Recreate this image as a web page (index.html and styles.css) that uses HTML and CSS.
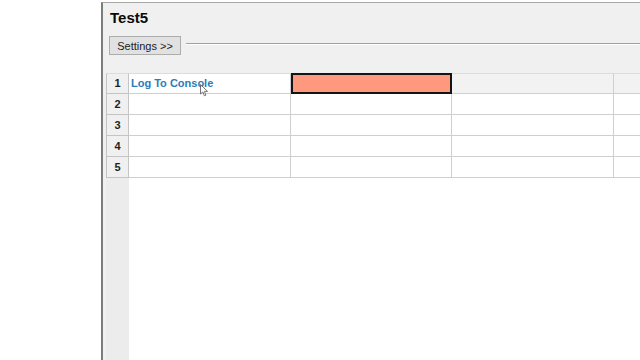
FILE: index.html
```html
<!DOCTYPE html>
<html lang="en">
<head>
  <meta charset="UTF-8" />
  <title>Test5</title>
  <meta name="viewport" content="width=device-width, initial-scale=1" />
  <link rel="stylesheet" href="styles.css">
</head>
<body>
  <div class="window">
    <h1 class="title">Test5</h1>
    <div class="toolbar">
      <button type="button" class="settings-btn">Settings &gt;&gt;</button>
      <span class="rule"></span>
    </div>
    <div class="sheet">
      <div class="row first">
        <div class="rowhead">1</div>
        <div class="cell action">Log To Console</div>
        <div class="cell selected"></div>
        <div class="cell dim"></div>
        <div class="cell dim"></div>
      </div>
      <div class="row">
        <div class="rowhead">2</div>
        <div class="cell"></div>
        <div class="cell"></div>
        <div class="cell"></div>
        <div class="cell"></div>
      </div>
      <div class="row">
        <div class="rowhead">3</div>
        <div class="cell"></div>
        <div class="cell"></div>
        <div class="cell"></div>
        <div class="cell"></div>
      </div>
      <div class="row">
        <div class="rowhead">4</div>
        <div class="cell"></div>
        <div class="cell"></div>
        <div class="cell"></div>
        <div class="cell"></div>
      </div>
      <div class="row">
        <div class="rowhead">5</div>
        <div class="cell"></div>
        <div class="cell"></div>
        <div class="cell"></div>
        <div class="cell"></div>
      </div>
      <div class="filler"></div>
    </div>
    <svg class="cursor" width="9" height="13" viewBox="0 0 9 13">
      <path d="M0.5 0.5 L0.5 10 L2.8 7.9 L4.4 11.8 L5.9 11.2 L4.4 7.4 L7.6 7.4 Z" fill="#fff" stroke="#555" stroke-width="1"/>
    </svg>
  </div>
</body>
</html>
```

FILE: styles.css
```css
*, *::before, *::after {
  box-sizing: border-box;
}

html, body {
  height: 100%;
}

body {
  margin: 0;
  background-color: #ffffff;
  font-family: 'Liberation Sans', Arial, sans-serif;
  color: #222;
  overflow: hidden;
}

.window {
  position: relative;
  margin: 2px 0 0 101px;
  height: calc(100% - 2px);
  background-color: #f0f0f0;
  border-left: 2px solid #7c7c7c;
  border-top: 1px solid #a8a8a8;
  display: flex;
  flex-direction: column;
  overflow: hidden;
}

.title {
  margin: 0;
  padding: 6px 0 0 7px;
  font-size: 15px;
  line-height: 18px;
  font-weight: 700;
  color: #0a0a0a;
}

/* Toolbar */
.toolbar {
  display: flex;
  align-items: center;
  gap: 5px;
  margin-top: 9px;
  padding-left: 6px;
}

.settings-btn {
  height: 19px;
  width: 72px;
  padding: 0;
  font-family: inherit;
  font-size: 11px;
  color: #222;
  background-color: #e1e1e1;
  border: 1px solid #adadad;
  border-radius: 0;
}

.rule {
  flex-grow: 1;
  height: 2px;
  margin-top: -3px;
  border-top: 1px solid #a0a0a0;
  border-bottom: 1px solid #ffffff;
}

/* Sheet grid */
.sheet {
  flex-grow: 1;
  margin: 18px 0 0 3px;
  display: flex;
  flex-direction: column;
}

.row {
  display: grid;
  grid-template-columns: 23px 162px 161px 162px 1fr;
  height: 21px;
}

.rowhead,
.cell {
  border-right: 1px solid #cfcfcf;
  border-bottom: 1px solid #cfcfcf;
}

.row .cell:last-child {
  border-right: none;
}

.row.first .rowhead,
.row.first .cell {
  border-top: 1px solid #dcdcdc;
}

.rowhead {
  background-color: #f0f0f0;
  border-left: 1px solid #c4c4c4;
  border-right-color: #c4c4c4;
  border-bottom-color: #c4c4c4;
  font-size: 11px;
  font-weight: 700;
  line-height: 20px;
  text-align: center;
  color: #1e1e1e;
}

.row.first .rowhead {
  line-height: 19px;
}

.cell {
  background-color: #ffffff;
}

.cell.dim {
  background-color: #f2f2f2;
}

.cell.action {
  padding-left: 2px;
  font-size: 11px;
  font-weight: 700;
  line-height: 19px;
  color: #2a7db8;
  white-space: nowrap;
}

.row.first .cell.selected {
  background-color: #fe997d;
  border: 2px solid #141414;
}

.filler {
  flex-grow: 1;
  background: linear-gradient(to right, #ececec 23px, #ffffff 23px);
}

.cursor {
  position: absolute;
  left: 97px;
  top: 81px;
  opacity: 0.8;
}
```
